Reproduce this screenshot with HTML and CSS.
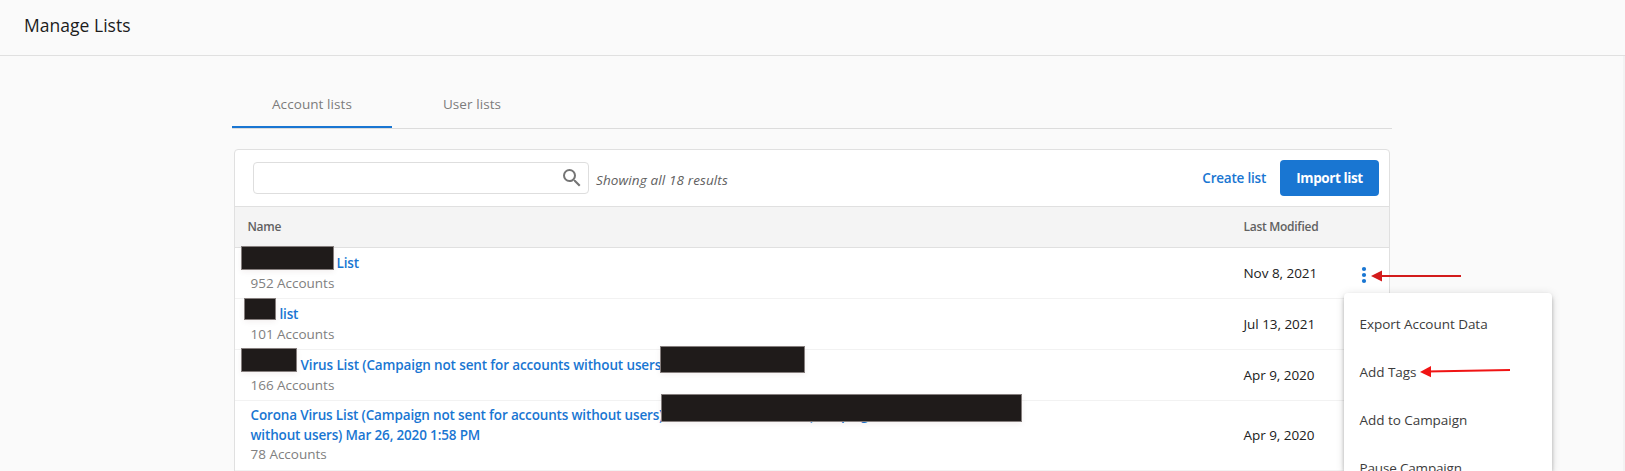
FILE: index.html
```html
<!DOCTYPE html>
<html lang="en">
<head>
<meta charset="utf-8">
<title>Manage Lists</title>
<link rel="stylesheet" href="styles.css">
</head>
<body>
<header class="topbar"><h1 class="title">Manage Lists</h1></header>
<main class="content">
  <nav class="tabs">
    <a class="tab active">Account lists</a>
    <a class="tab">User lists</a>
  </nav>
  <section class="card">
    <div class="toolbar">
      <div class="search">
        <svg class="search-icon" width="24" height="24" viewBox="0 0 24 24"><path fill="#757575" d="M15.5 14h-.79l-.28-.27A6.471 6.471 0 0 0 16 9.5 6.5 6.5 0 1 0 9.5 16c1.61 0 3.09-.59 4.23-1.57l.27.28v.79l5 4.99L20.49 19l-4.99-5zm-6 0C7.01 14 5 11.99 5 9.5S7.01 5 9.5 5 14 7.01 14 9.5 11.99 14 9.5 14z"/></svg>
      </div>
      <em class="results">Showing all 18 results</em>
      <a class="create">Create list</a>
      <button class="import">Import list</button>
    </div>
    <div class="head"><span class="h-name">Name</span><span class="h-date">Last Modified</span></div>
    <div class="row">
      <div class="name"><a class="link l1">List</a><span class="count">952 Accounts</span></div>
      <span class="date">Nov 8, 2021</span>
      <svg class="dots" width="6" height="18" viewBox="0 0 6 18"><g fill="#1976d2"><circle cx="3" cy="3" r="2.1"/><circle cx="3" cy="9" r="2.1"/><circle cx="3" cy="15" r="2.1"/></g></svg>
    </div>
    <div class="row">
      <div class="name"><a class="link l2">list</a><span class="count">101 Accounts</span></div>
      <span class="date">Jul 13, 2021</span>
    </div>
    <div class="row">
      <div class="name"><a class="link l3">Virus List (Campaign not sent for accounts without users)</a><span class="count">166 Accounts</span></div>
      <span class="date">Apr 9, 2020</span>
    </div>
    <div class="row tall">
      <div class="name"><a class="link">Corona Virus List (Campaign not sent for accounts without users)<span class="more">(Campaign</span></a><a class="link">without users) Mar 26, 2020 1:58 PM</a><span class="count c4">78 Accounts</span></div>
      <span class="date">Apr 9, 2020</span>
    </div>
  </section>
</main>
<div class="scrollbar"></div>
<div class="redact r1"></div>
<div class="redact r2"></div>
<div class="redact r3"></div>
<div class="redact r4"></div>
<div class="redact r5"></div>
<div class="menu">
  <a class="item">Export Account Data</a>
  <a class="item">Add Tags</a>
  <a class="item">Add to Campaign</a>
  <a class="item last">Pause Campaign</a>
</div>
<svg class="arrow a1" width="94" height="14" viewBox="0 0 94 14"><path d="M8 7H91" stroke="#d31c1c" stroke-width="2"/><path d="M1 7L12 1.5V12.5Z" fill="#d31c1c"/></svg>
<svg class="arrow a2" width="94" height="14" viewBox="0 0 94 14"><path d="M8 7.6L91 6" stroke="#f01414" stroke-width="2"/><path d="M1 8L12 2V13.300Z" fill="#f01414"/></svg>
</body>
</html>
```
FILE: styles.css
```css
* { box-sizing: border-box; }
body { margin: 0; width: 1625px; height: 471px; overflow: hidden; position: relative; background: #fafafa; color: #212121; font-family: "Open Sans", "Noto Sans", sans-serif; font-size: 13.5px; white-space: nowrap; }
.topbar { height: 56px; border-bottom: 1px solid #e0e0e0; padding: 13px 0 0 24px; }
.title { margin: 0; font-size: 17.5px; font-weight: 500; line-height: 25px; letter-spacing: .03px; color: #1c1c1c; }
.content { height: 415px; overflow: hidden; padding: 24px 0 0 232px; }
.tabs { display: flex; width: 1160px; height: 49px; border-bottom: 1px solid #dcdcdc; color: #7c7c7c; font-weight: 520; letter-spacing: .08px; }
.tab { width: 160px; display: flex; justify-content: center; padding-top: 14px; line-height: 20px; }
.active { border-bottom: 2px solid #1976d2; }
.card { margin: 20px 0 0 2px; width: 1156px; background: #fff; border: 1px solid #e0e0e0; border-radius: 4px 4px 0 0; }
.toolbar { height: 56px; display: flex; padding-left: 18px; }
.search { width: 336px; height: 32px; margin-top: 12px; border: 1px solid #dedede; border-radius: 4px; display: flex; justify-content: flex-end; padding: 3px 4px 0 0; }
.results { margin: 20px 0 0 7px; line-height: 20px; color: #616161; letter-spacing: .12px; }
.create { margin: 18px 14px 0 auto; line-height: 20px; color: #1976d2; font-weight: 600; letter-spacing: -.22px; }
.import { width: 99px; height: 36px; margin: 10px 10px 0 0; border: 0; border-radius: 4px; background: #1976d2; color: #fff; font: 700 13.5px "Open Sans", sans-serif; letter-spacing: -.4px; padding: 0; }
.head { height: 42px; background: #f4f4f4; border: solid #e0e0e0; border-width: 1px 0; display: flex; padding: 10px 0 0 12.5px; line-height: 20px; font-size: 12px; font-weight: 600; letter-spacing: -.28px; color: #616161; }
.h-name { width: 996px; }
.row { height: 51px; border-bottom: 1px solid #f2f2f2; display: flex; align-items: center; padding-left: 15.5px; }
.tall { height: 70px; }
.tall .name { margin-bottom: 3px; }
.name { width: 993px; display: flex; flex-direction: column; line-height: 20px; }
.link { color: #1976d2; font-weight: 600; letter-spacing: -.16px; }
.l1 { padding-left: 86px; }
.l2 { padding-left: 29px; }
.l3 { padding-left: 50px; letter-spacing: -.13px; }
.more { padding-left: 145px; }
.count { color: #808080; letter-spacing: -.02px; }
.c4 { line-height: 18px; }
.date { width: 117px; line-height: 20px; letter-spacing: -.04px; margin-bottom: 1px; }
.dots { margin-top: 3px; }
.scrollbar { position: absolute; left: 1623px; top: 56px; width: 2px; height: 415px; background: #f3f3f3; }
.redact { position: absolute; background: #1f1b1a; border: 1px solid #857e7d; box-shadow: 0 2px 6px rgba(60, 20, 20, .06); }
.r1 { left: 241px; top: 246px; width: 93px; height: 24px; }
.r2 { left: 244px; top: 298px; width: 32px; height: 22px; }
.r3 { left: 241px; top: 348px; width: 56px; height: 24px; }
.r4 { left: 660px; top: 346px; width: 145px; height: 27px; }
.r5 { left: 661px; top: 394px; width: 361px; height: 28px; }
.menu { position: absolute; left: 1344px; top: 293px; width: 208px; height: 178px; padding-top: 8px; border-radius: 4px 4px 0 0; background: #fff; box-shadow: 0 2px 4px -1px rgba(0,0,0,.2), 0 4px 5px rgba(0,0,0,.14), 0 1px 10px rgba(0,0,0,.12); color: #3c3c3c; letter-spacing: -.04px; overflow: hidden; }
.item { display: block; height: 48px; line-height: 47px; padding-left: 15.5px; }
.last { letter-spacing: -.17px; }
.arrow { position: absolute; }
.a1 { left: 1370px; top: 269px; }
.a2 { left: 1419px; top: 364px; }
```
